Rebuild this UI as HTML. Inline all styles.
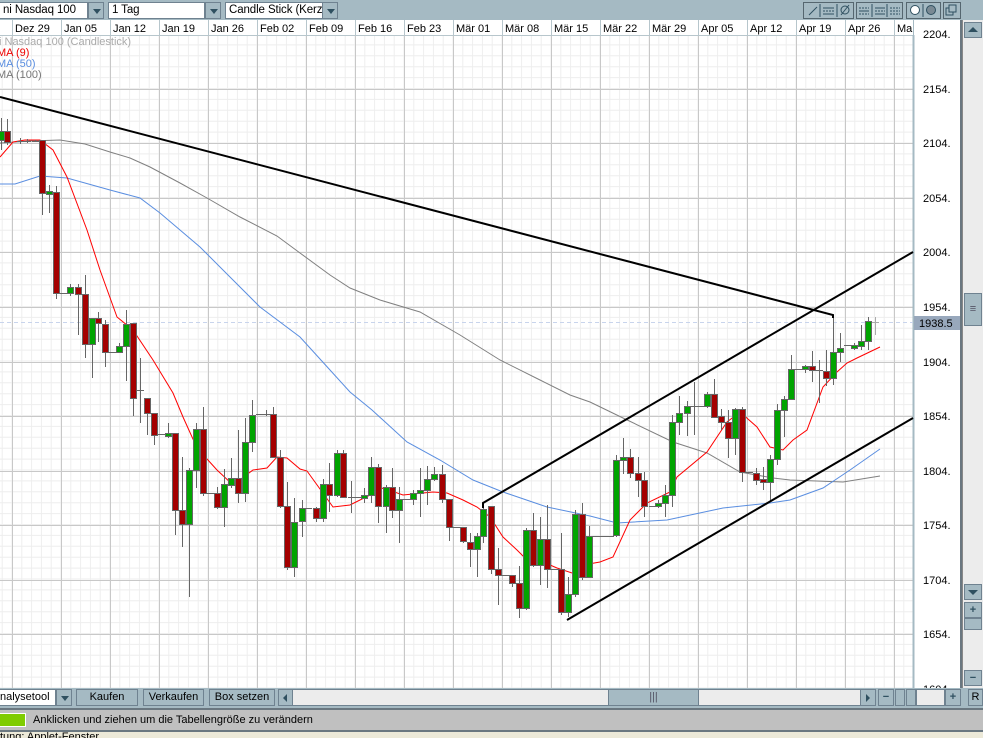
<!DOCTYPE html>
<html><head><meta charset="utf-8">
<style>
*{margin:0;padding:0;box-sizing:border-box}
body{width:983px;height:738px;overflow:hidden;background:#a5bac3;font-family:"Liberation Sans",Arial,sans-serif;font-size:11px;position:relative}
.abs{position:absolute}
.sel{position:absolute;top:2px;height:17px;background:#fff;border:1px solid #6f8290;padding-left:3px;line-height:15px;font-size:11.5px;letter-spacing:-0.1px;white-space:nowrap;overflow:hidden}
.arr{position:absolute;top:2px;height:17px;width:16px;background:#a5bac3;border:1px solid #6f8290}
.arr:after{content:"";position:absolute;left:4px;top:6px;border-left:4px solid transparent;border-right:4px solid transparent;border-top:5px solid #2f5060}
.btn{position:absolute;top:689px;height:17px;background:#a5bac3;border:1px solid #6f8290;text-align:center;line-height:15px;font-size:11px}
.ib{position:absolute;top:2px;height:17px;border:1px solid #55666f;background:#a5bac3}
</style></head><body>
<div class="sel" style="left:-1px;width:89px">ni Nasdaq 100</div><div class="arr" style="left:88px"></div>
<div class="sel" style="left:108px;width:97px">1 Tag</div><div class="arr" style="left:205px"></div>
<div class="sel" style="left:225px;width:98px">Candle Stick (Kerze</div><div class="arr" style="left:322px"></div>
<div class="ib" style="left:803px;width:51px"></div>
<div class="ib" style="left:856px;width:47px"></div>
<div class="ib" style="left:906px;width:35px"></div>
<div class="ib" style="left:943px;width:18px"></div>
<svg class="abs" style="left:0;top:0" width="983" height="20">
<g stroke="#2f5060" fill="none" stroke-width="1">
<line x1="809" y1="15" x2="817" y2="7"/><line x1="820" y1="4" x2="820" y2="17"/><line x1="837" y1="4" x2="837" y2="17"/>
<line x1="823" y1="8" x2="834" y2="8"/><line x1="823" y1="11" x2="834" y2="11" stroke-dasharray="2 1"/><line x1="823" y1="14" x2="834" y2="14"/>
<circle cx="845" cy="10" r="4"/><line x1="841" y1="15" x2="849" y2="5"/>
<line x1="872" y1="4" x2="872" y2="17"/><line x1="887" y1="4" x2="887" y2="17"/>
<line x1="859" y1="8" x2="869" y2="8" stroke-dasharray="2 1"/><line x1="859" y1="11" x2="869" y2="11"/><line x1="859" y1="14" x2="869" y2="14" stroke-dasharray="2 1"/>
<line x1="875" y1="8" x2="885" y2="8"/><line x1="875" y1="11" x2="885" y2="11" stroke-dasharray="2 1"/><line x1="875" y1="14" x2="885" y2="14"/>
<line x1="890" y1="8" x2="900" y2="8" stroke-dasharray="2 1"/><line x1="890" y1="11" x2="900" y2="11" stroke-dasharray="2 1"/><line x1="890" y1="14" x2="900" y2="14" stroke-dasharray="2 1"/>
<line x1="923" y1="4" x2="923" y2="17"/>
<circle cx="915" cy="10" r="4.5" fill="#fff" stroke="#2f5060"/><circle cx="931" cy="10" r="4.5" fill="#7a8a94" stroke="#2f5060"/>
<rect x="946" y="8" width="7" height="7"/><rect x="949" y="5" width="7" height="7" fill="#a5bac3"/>
</g></svg>
<svg id="ch" class="abs" style="left:0;top:20px" width="962" height="668" viewBox="0 20 962 668"></svg>
<div class="abs" style="left:960px;top:20px;width:2px;height:668px;background:#6a7780"></div>
<div class="abs" style="left:962px;top:20px;width:21px;height:668px;background:#ececec;border-left:1px solid #888"></div>
<div class="abs" style="left:964px;top:22px;width:18px;height:16px;background:#a5bac3;border:1px solid #6f8290"></div>
<div class="abs" style="left:968px;top:27px;border-left:5px solid transparent;border-right:5px solid transparent;border-bottom:5px solid #2f5060"></div>
<div class="abs" style="left:964px;top:293px;width:18px;height:33px;background:#a5bac3;border:1px solid #6f8290;text-align:center;line-height:30px;color:#556">≡</div>
<div class="abs" style="left:964px;top:584px;width:18px;height:16px;background:#a5bac3;border:1px solid #6f8290"></div>
<div class="abs" style="left:968px;top:590px;border-left:5px solid transparent;border-right:5px solid transparent;border-top:5px solid #2f5060"></div>
<div class="abs" style="left:964px;top:602px;width:18px;height:16px;background:#a5bac3;border:1px solid #6f8290;text-align:center;font-weight:bold;line-height:14px;color:#2f5060">+</div>
<div class="abs" style="left:964px;top:618px;width:18px;height:12px;background:#a5bac3;border:1px solid #6f8290"></div>
<div class="abs" style="left:964px;top:670px;width:18px;height:16px;background:#a5bac3;border:1px solid #6f8290;text-align:center;font-weight:bold;line-height:14px;color:#2f5060">−</div>
<div class="abs" style="left:0;top:688px;width:983px;height:20px;background:#a5bac3"></div>
<div class="abs" style="left:-1px;top:689px;width:57px;height:17px;background:#fff;border:1px solid #6f8290;line-height:15px">nalysetool</div>
<div class="arr" style="left:56px;top:689px"></div>
<div class="btn" style="left:76px;width:62px">Kaufen</div>
<div class="btn" style="left:143px;width:61px">Verkaufen</div>
<div class="btn" style="left:209px;width:66px">Box setzen</div>
<div class="abs" style="left:278px;top:689px;width:598px;height:17px;background:#ececec;border:1px solid #6f8290"></div>
<div class="abs" style="left:278px;top:689px;width:15px;height:17px;background:#a5bac3;border:1px solid #6f8290"></div>
<div class="abs" style="left:283px;top:694px;border-top:4px solid transparent;border-bottom:4px solid transparent;border-right:4px solid #2f5060"></div>
<div class="abs" style="left:608px;top:689px;width:91px;height:17px;background:#a5bac3;border:1px solid #6f8290;text-align:center;line-height:14px;color:#556">|||</div>
<div class="abs" style="left:860px;top:689px;width:16px;height:17px;background:#a5bac3;border:1px solid #6f8290"></div>
<div class="abs" style="left:866px;top:694px;border-top:4px solid transparent;border-bottom:4px solid transparent;border-left:4px solid #2f5060"></div>
<div class="btn" style="left:878px;width:16px;font-weight:bold;color:#2f5060">−</div>
<div class="btn" style="left:895px;width:10px"></div>
<div class="btn" style="left:906px;width:10px"></div>
<div class="btn" style="left:916px;width:29px;background:#ececec"></div>
<div class="btn" style="left:945px;width:16px;font-weight:bold;color:#2f5060">+</div>
<div class="btn" style="left:968px;width:15px">R</div>
<div class="abs" style="left:0;top:708px;width:983px;height:2px;background:#6a7780"></div>
<div class="abs" style="left:0;top:710px;width:983px;height:20px;background:#c0c0c0"></div>
<div class="abs" style="left:0;top:713px;width:26px;height:14px;background:#7fcc00;border:1px solid #fff;border-left:0"></div>
<div class="abs" style="left:33px;top:714px;font-size:11px">Anklicken und ziehen um die Tabellengröße zu verändern</div>
<div class="abs" style="left:0;top:730px;width:983px;height:2px;background:#6a7780"></div>
<div class="abs" style="left:0;top:732px;width:983px;height:6px;background:#ece9d8;overflow:hidden"><div style="position:absolute;top:-1px;left:0;font-size:11px">tung: Applet-Fenster</div></div>
<script>
var s='';
s+='<rect x="0" y="20" width="913" height="668" fill="#fff"/>';
s+='<rect x="914" y="20" width="46" height="668" fill="#fff"/>';
var m='';
for(var x=12-49;x<913;x+=9.8){m+='M'+x.toFixed(1)+' 35V688';}
for(var y=88.5;y>35;y-=10.9){m+='M0 '+y.toFixed(1)+'H913';}
for(var y=88.5;y<688;y+=10.9){m+='M0 '+y.toFixed(1)+'H913';}
s+='<path d="'+m+'" stroke="#eeeeee" stroke-width="1" fill="none"/>';
var M='';
for(var x=12;x<913;x+=49){M+='M'+(x+0.5)+' 20V688';}
var levels=[2154,2104,2054,2004,1954,1904,1854,1804,1754,1704,1654];
levels.forEach(function(p){var y=Math.round(307-(p-1954)*1.0905)+0.5;M+='M0 '+y+'H913';});
s+='<path d="'+M+'" stroke="#c8c8c8" fill="none"/>';
s+='<rect x="0" y="20" width="913" height="15" fill="#fff"/>';
var H='';for(var x=12;x<913;x+=49){H+='M'+(x+0.5)+' 20V35';}
s+='<path d="'+H+'M0 35.5H913" stroke="#b7c6cc" fill="none"/>';
var d=['Dez 29','Jan 05','Jan 12','Jan 19','Jan 26','Feb 02','Feb 09','Feb 16','Feb 23','Mär 01','Mär 08','Mär 15','Mär 22','Mär 29','Apr 05','Apr 12','Apr 19','Apr 26','Ma'];
d.forEach(function(t,i){s+='<text x="'+(15+49*i)+'" y="32" font-size="11" fill="#000">'+t+'</text>';});
s+='<line x1="913.5" y1="35" x2="913.5" y2="688" stroke="#a5bac3" stroke-width="2"/>';
[2204].concat(levels).concat([1604]).forEach(function(p){var y=Math.round(307-(p-1954)*1.0905)+4;s+='<text x="923" y="'+y+'" font-size="11">'+p+'.</text>';});
s+='<text x="-1" y="45" font-size="11" fill="#aaa">i Nasdaq 100 (Candlestick)</text>';
s+='<text x="-3" y="56" font-size="11" fill="#e00">MA (9)</text>';
s+='<text x="-3" y="67" font-size="11" fill="#5a8ee0">MA (50)</text>';
s+='<text x="-3" y="78" font-size="11" fill="#777">MA (100)</text>';
s+='<line x1="0" y1="322.5" x2="913" y2="322.5" stroke="#c8d4ec" stroke-dasharray="4 3"/>';
function pl(a,c){return '<polyline fill="none" stroke="'+c+'" stroke-width="1" points="'+a.map(function(p){return p.join(',')}).join(' ')+'"/>';}
s+=pl([[0,143],[30,141],[60,140],[85,144],[110,152],[130,158],[150,167],[165,175],[180,183],[207,198],[240,217],[277,236],[300,253],[330,275],[350,288],[380,300],[420,312],[460,335],[500,360],[540,380],[570,395],[590,402],[623,418],[673,442],[707,453],[740,472],[773,478],[790,480],[843,482],[880,476]],'#808080');
s+=pl([[0,184],[15,184],[40,176],[67,178],[110,190],[140,198],[160,213],[180,230],[200,247],[233,280],[260,307],[300,337],[330,370],[350,392],[372,410],[407,442],[440,460],[473,480],[503,492],[547,507],[590,516],[617,523],[667,520],[723,508],[770,503],[790,500],[823,488],[850,470],[880,449]],'#5a8ee0');
s+=pl([[0,157],[13,142],[25,140],[40,140],[53,150],[67,177],[87,230],[100,270],[117,317],[133,330],[153,360],[173,393],[183,417],[197,448],[217,470],[233,485],[253,470],[267,468],[277,457],[287,458],[300,469],[307,471],[333,507],[350,505],[370,495],[383,488],[403,495],[433,492],[447,493],[463,500],[477,507],[490,517],[503,537],[517,550],[527,560],[543,562],[557,568],[572,573],[583,565],[600,562],[613,557],[630,520],[647,503],[670,492],[677,477],[707,452],[727,422],[740,412],[757,427],[770,447],[783,450],[793,440],[807,430],[823,387],[837,372],[847,363],[857,358],[880,347]],'#ff0000');
var C=[[1,131,140,118,150,'g'],[7,131,142,119,145,'r'],[20,141,141,138,144,'d'],[27,141,141,139,143,'d'],[35,141,141,140,142,'d'],[42,140,193,140,215,'r'],[49,191,193,185,213,'g'],[56,192,293,186,299,'r'],[63,293,293,293,293,'d'],[70,287,293,284,296,'g'],[78,287,294,284,335,'r'],[85,294,344,275,358,'r'],[92,318,344,318,378,'g'],[98,318,323,312,342,'r'],[105,324,352,320,367,'r'],[112,352,352,352,352,'d'],[119,346,352,343,353,'g'],[126,324,346,310,381,'g'],[133,323,398,323,416,'r'],[140,390,390,358,423,'d'],[147,398,413,398,435,'r'],[154,413,435,413,445,'r'],[161,434,434,434,434,'d'],[168,433,435,423,438,'g'],[175,433,510,433,535,'r'],[182,510,524,457,547,'r'],[189,470,524,468,597,'g'],[196,429,470,423,488,'g'],[203,429,493,407,496,'r'],[210,493,493,493,493,'d'],[217,493,507,487,509,'r'],[224,484,507,469,527,'g'],[231,478,485,458,488,'g'],[238,478,493,430,503,'r'],[245,442,493,418,502,'g'],[252,415,442,400,452,'g'],[259,414,414,414,414,'d'],[266,414,414,410,416,'d'],[273,414,457,407,457,'r'],[280,457,506,450,508,'r'],[287,506,567,482,570,'r'],[294,522,567,498,577,'g'],[302,508,521,500,537,'g'],[308,508,508,508,508,'d'],[316,508,518,507,522,'r'],[323,484,518,479,522,'g'],[329,484,495,463,512,'r'],[337,453,495,450,497,'g'],[343,453,497,450,498,'r'],[351,497,497,481,513,'d'],[357,497,497,497,497,'d'],[364,495,497,488,503,'g'],[371,467,495,457,503,'g'],[378,467,506,464,523,'r'],[386,487,506,485,533,'g'],[392,487,510,468,518,'r'],[399,499,510,487,543,'g'],[406,499,499,499,499,'d'],[413,493,499,490,505,'g'],[420,490,493,468,517,'g'],[427,479,490,466,505,'g'],[434,474,479,467,481,'g'],[442,474,499,465,503,'r'],[449,499,527,499,541,'r'],[456,527,527,527,527,'d'],[463,527,541,527,543,'r'],[470,542,549,533,567,'r'],[477,536,549,533,577,'g'],[483,509,536,505,543,'g'],[491,506,569,506,574,'r'],[498,569,575,548,605,'r'],[505,575,575,575,575,'d'],[512,575,583,575,587,'r'],[519,583,608,566,618,'r'],[526,530,608,528,610,'g'],[533,530,565,513,567,'r'],[540,539,565,517,585,'g'],[547,539,569,505,588,'r'],[554,569,569,569,569,'d'],[561,569,612,533,615,'r'],[568,594,612,577,617,'g'],[575,514,594,510,597,'g'],[582,514,577,503,580,'r'],[589,536,577,526,578,'g'],[596,536,536,536,536,'d'],[603,536,536,536,536,'d'],[610,536,536,536,536,'d'],[616,460,535,455,537,'g'],[623,457,460,438,474,'g'],[630,457,473,449,478,'r'],[638,473,480,457,497,'r'],[644,480,506,472,517,'r'],[652,506,506,506,506,'d'],[658,503,506,500,508,'g'],[665,495,503,485,517,'g'],[672,422,495,415,507,'g'],[679,413,422,396,435,'g'],[687,406,413,401,436,'g'],[694,406,406,382,435,'d'],[701,406,406,406,406,'d'],[707,394,406,392,408,'g'],[714,394,417,379,418,'r'],[721,416,422,409,430,'r'],[728,422,438,410,458,'r'],[735,409,438,408,455,'g'],[742,409,472,407,482,'r'],[749,472,472,472,472,'d'],[756,473,480,468,485,'r'],[763,479,482,467,490,'r'],[770,459,482,455,502,'g'],[777,410,459,404,465,'g'],[784,399,410,396,437,'g'],[791,369,399,355,400,'g'],[798,369,369,369,369,'d'],[805,366,369,365,373,'g'],[812,366,370,351,382,'r'],[819,370,370,360,403,'d'],[826,371,378,350,386,'r'],[833,352,378,315,385,'g'],[840,348,352,333,362,'g'],[847,345,345,345,345,'d'],[854,345,348,343,350,'g'],[861,341,346,325,350,'g'],[868,321,341,317,350,'g'],[875,322,322,317,335,'l']];
C.forEach(function(c){var x=c[0]+0.5,col=c[5]=='l'?'#aaa':'#666';
s+='<line x1="'+x+'" y1="'+c[3]+'" x2="'+x+'" y2="'+c[4]+'" stroke="'+col+'"/>';
if(c[5]=='d'||c[5]=='l'){s+='<line x1="'+(x-3.5)+'" y1="'+(c[1]+0.5)+'" x2="'+(x+3.5)+'" y2="'+(c[1]+0.5)+'" stroke="'+col+'"/>';}
else{var h=Math.max(c[2]-c[1],3);s+='<rect x="'+(x-3)+'" y="'+(c[1]+0.5)+'" width="6" height="'+h+'" fill="'+(c[5]=='g'?'#00a400':'#a40000')+'" stroke="#666"/>';}
});
s+='<g stroke="#000" stroke-width="2" fill="none"><polyline points="0,97 833,315 833,318"/><polyline points="483,508 483,503 913,252"/><line x1="567" y1="620" x2="913" y2="418"/></g>';
s+='<rect x="914" y="316" width="46" height="14" fill="#98a8bc"/><text x="919" y="327" font-size="11">1938.5</text>';
document.getElementById('ch').innerHTML=s;
</script>
</body></html>
